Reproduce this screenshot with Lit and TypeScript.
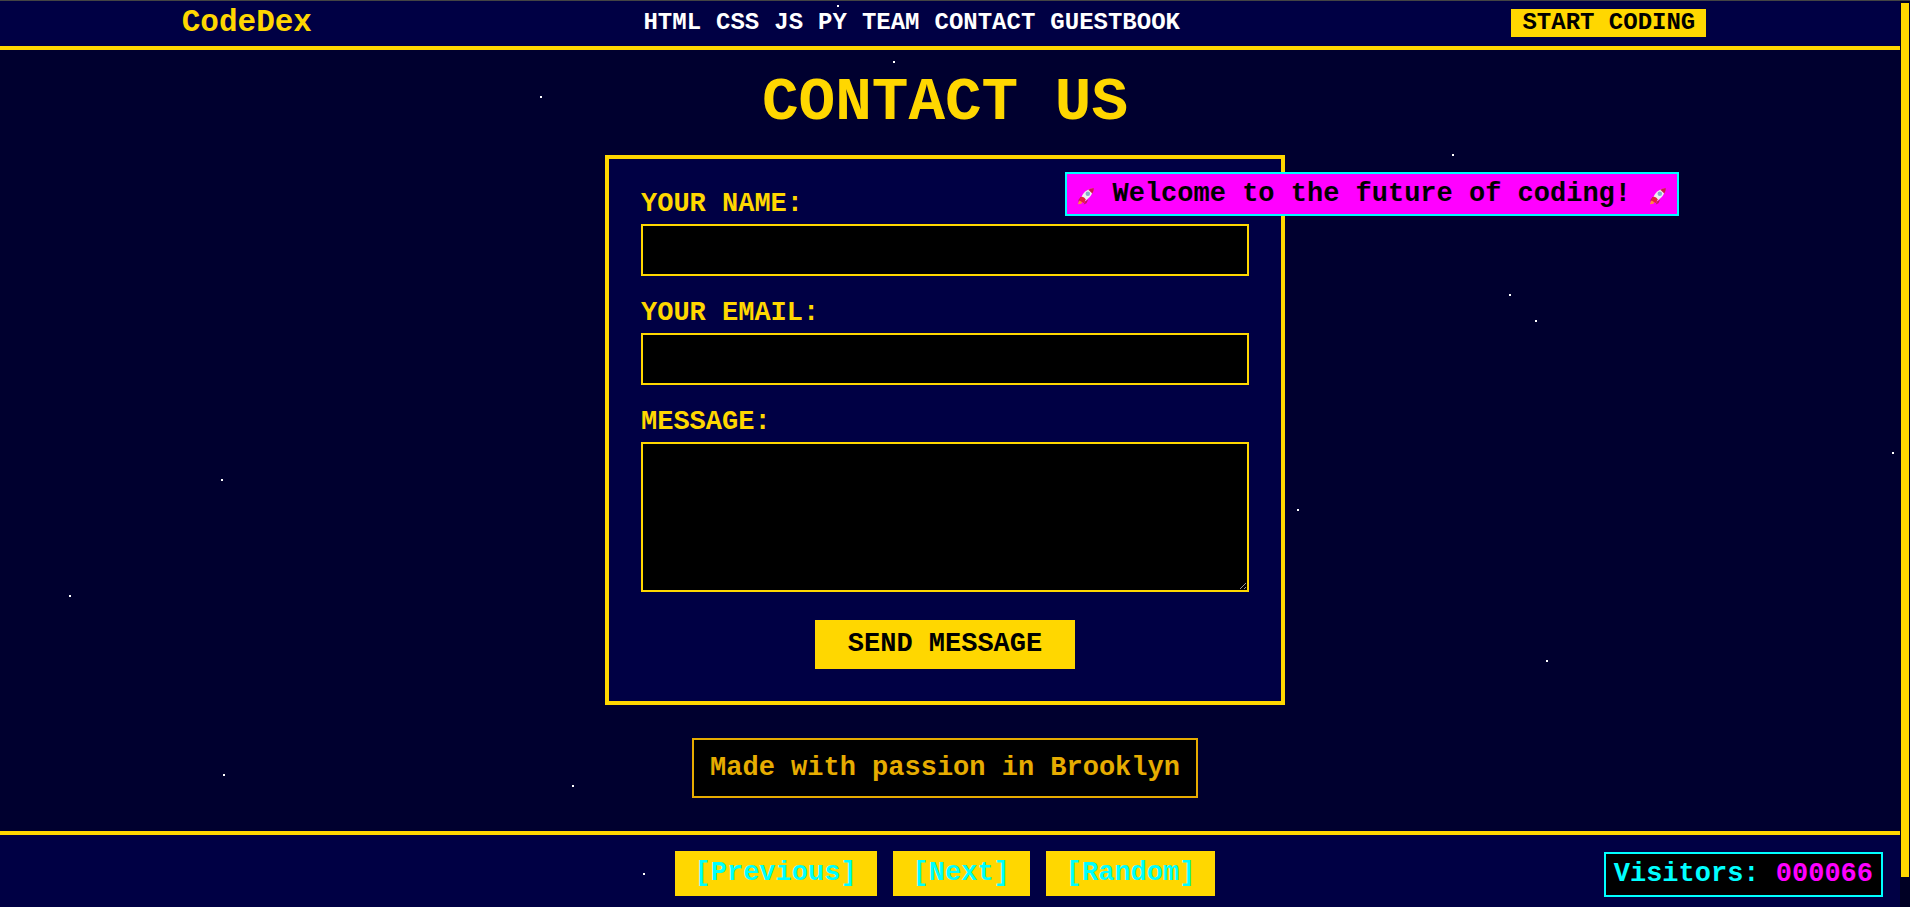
import { LitElement, html, svg, css } from "lit";
import { customElement } from "lit/decorators.js";

const STARS: [number, number][] = [
  [837, 5], [893, 61], [540, 96], [1452, 154], [1509, 294], [1535, 320],
  [221, 479], [69, 595], [1297, 509], [1892, 452], [1546, 660], [223, 774],
  [572, 785], [643, 873],
];

const LINKS = ["HTML", "CSS", "JS", "PY", "TEAM", "CONTACT", "GUESTBOOK"];

const rocket = html`<svg class="rocket" viewBox="0 0 20 20" aria-hidden="true">
  <path d="M4 11 1.500 14.500 2 17 6 13zM9 16 7.500 19.500 10.500 18 12.500 14z" fill="#c2185b" />
  <path d="M2.500 15 1 19.300 5 18.500 6 16z" fill="#ff8a3c" />
  <path d="M4.500 14.500C4.500 9 9 3 17.500 1.500C18 8 13.500 13.500 7 16.500z" fill="#f0f0f0" />
  <path d="M12.500 3C14.500 1.800 16.500 1.200 18.500 1C18.800 3 18 5.500 17 7.200z" fill="#d0184a" />
  <path d="M3.500 11.500C5.500 10 8.500 11.500 9.500 13.500L8 18 5 16.500 3 15z" fill="#e5213f" />
  <circle cx="12" cy="7.500" r="2.500" fill="#82aec8" />
</svg>`;

@customElement("app-root")
export class AppRoot extends LitElement {
  static styles = css`
    :host {
      --gold: #ffd700;
      --cyan: #00ffff;
      --panel: #000044;
      display: flex;
      position: relative;
      min-height: 100vh;
      box-sizing: border-box;
      overflow: hidden;
      border-top: 1px solid #444444;
      background: #00002f;
      color: #ffffff;
      font: bold 27px/32px "Liberation Mono", monospace;
    }
    * { box-sizing: border-box; }
    .page { flex: 1; display: flex; flex-direction: column; }
    .header {
      display: flex;
      justify-content: space-around;
      align-items: center;
      padding: 8px 28px 9px 16px;
      background: var(--panel);
      border-bottom: 4px solid var(--gold);
      line-height: 28px;
    }
    .logo { font-size: 31px; color: var(--gold); }
    .nav { display: flex; gap: 15px; font-size: 24px; }
    a { color: inherit; text-decoration: none; white-space: nowrap; }
    button {
      border: 0;
      border-radius: 0;
      background: var(--gold);
      color: #000000;
      font: inherit;
      white-space: nowrap;
    }
    .start { padding: 0 11px; font-size: 24px; line-height: 28px; }
    .main {
      flex: 1;
      display: flex;
      flex-direction: column;
      align-items: center;
      padding: 21px 10px 30px 0;
    }
    .title {
      margin: 0 0 20px;
      font-size: 61px;
      line-height: 64px;
      color: var(--gold);
    }
    .form {
      display: flex;
      flex-direction: column;
      width: 100%;
      max-width: 680px;
      padding: 32px;
      background: var(--panel);
      border: 4px solid var(--gold);
    }
    .label { margin-bottom: 7px; line-height: 26px; color: var(--gold); }
    .field {
      width: 100%;
      height: 52px;
      margin-bottom: 24px;
      padding: 8px;
      border: 2px solid var(--gold);
      border-radius: 0;
      background: #000000;
      color: #ffffff;
      color-scheme: dark;
      font: inherit;
      outline: none;
    }
    .area { height: 150px; margin-bottom: 28px; resize: vertical; }
    .send { align-self: center; padding: 8px 33px; line-height: 33px; }
    .made {
      margin: 33px 0 0;
      padding: 12px 16px;
      border: 2px solid #e6ac00;
      background: #000000;
      color: #e6ac00;
    }
    .footer {
      display: flex;
      justify-content: center;
      gap: 16px;
      padding: 16px 10px 11px 0;
      background: var(--panel);
      border-top: 4px solid var(--gold);
    }
    .ring { padding: 6px 20px; line-height: 33px; color: var(--cyan); }
    .scroll { width: 10px; padding: 2px 1px 30px; background: #000024; }
    .thumb { height: 100%; background: var(--gold); }
    .stars { position: absolute; inset: 0; width: 100%; height: 100%; pointer-events: none; }
    .popup {
      position: absolute;
      top: 171px;
      right: 231px;
      display: flex;
      align-items: center;
      gap: 18px;
      padding: 4px 10px;
      border: 2px solid var(--cyan);
      background: #ff00ff;
      color: #000000;
      white-space: nowrap;
    }
    .rocket { width: 18px; height: 18px; margin-top: 4px; }
    .visitors {
      position: absolute;
      right: 27px;
      bottom: 10px;
      padding: 4px 8px;
      border: 2px solid var(--cyan);
      background: #000000;
      color: var(--cyan);
      line-height: 33px;
    }
    .count { color: #ff00ff; }
  `;

  render() {
    return html`
      <div class="page">
        <header class="header">
          <a class="logo" href="#">CodeDex</a>
          <nav class="nav">${LINKS.map((l) => html`<a href="#${l.toLowerCase()}">${l}</a>`)}</nav>
          <button class="start">START CODING</button>
        </header>
        <main class="main">
          <h1 class="title">CONTACT US</h1>
          <form class="form" @submit=${(e: Event) => e.preventDefault()}>
            <label class="label" for="name">YOUR NAME:</label>
            <input class="field" id="name" type="text" />
            <label class="label" for="email">YOUR EMAIL:</label>
            <input class="field" id="email" type="email" />
            <label class="label" for="message">MESSAGE:</label>
            <textarea class="field area" id="message"></textarea>
            <button class="send" type="submit">SEND MESSAGE</button>
          </form>
          <p class="made">Made with passion in Brooklyn</p>
        </main>
        <footer class="footer">
          <button class="ring">[Previous]</button>
          <button class="ring">[Next]</button>
          <button class="ring">[Random]</button>
        </footer>
      </div>
      <div class="scroll"><div class="thumb"></div></div>
      <svg class="stars" aria-hidden="true">
        ${STARS.map(([x, y]) => svg`<rect x=${x} y=${y - 1} width="2" height="2" fill="#fff"></rect>`)}
      </svg>
      <div class="popup">${rocket}<span>Welcome to the future of coding!</span>${rocket}</div>
      <div class="visitors">Visitors: <span class="count">000066</span></div>
    `;
  }
}
